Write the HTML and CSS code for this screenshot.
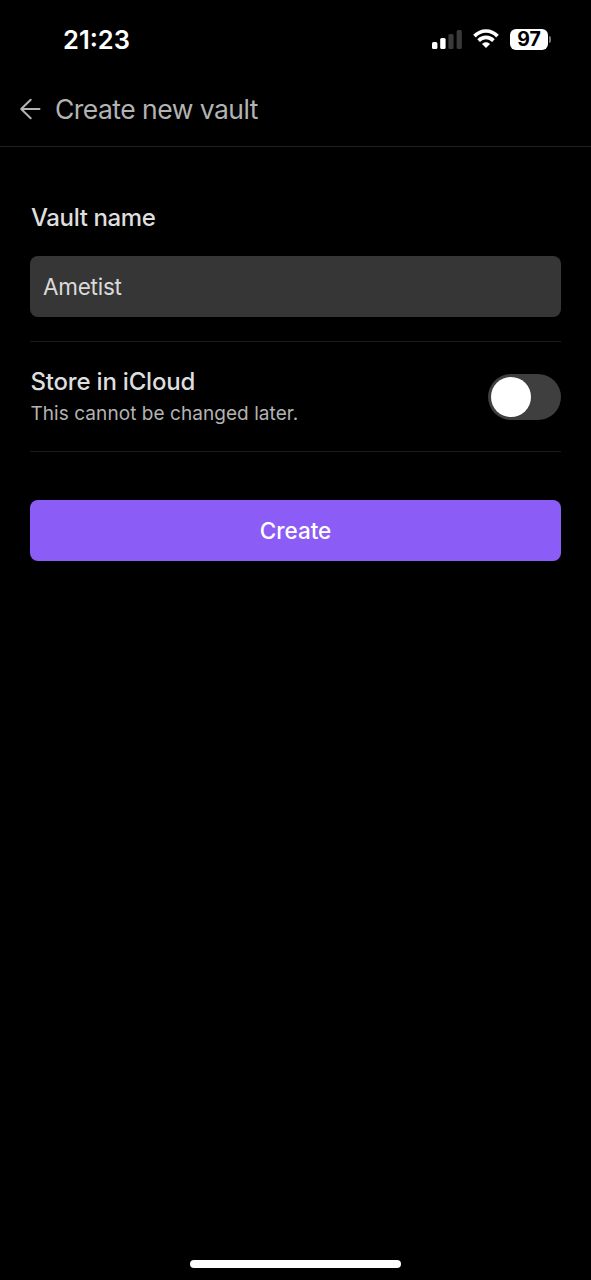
FILE: index.html
```html
<!DOCTYPE html>
<html lang="en">
<head>
<meta charset="utf-8">
<title>Create new vault</title>
<link rel="stylesheet" href="styles.css">
</head>
<body>
<div class="screen">
  <div class="status-bar">
    <span class="clock">21:23</span>
    <div class="indicators">
      <svg class="signal" width="30" height="20" viewBox="0 0 30 20">
        <rect x="0" y="12" width="5.4" height="7" rx="1.5" fill="#fff"/>
        <rect x="8.2" y="8" width="5.4" height="11" rx="1.5" fill="#fff"/>
        <rect x="16.4" y="4" width="5.2" height="15" rx="1.5" fill="#3a3a3a"/>
        <rect x="24.6" y="0" width="5.2" height="19" rx="1.5" fill="#3a3a3a"/>
      </svg>
      <svg class="wifi" width="26" height="20" viewBox="0 0 26 20">
        <g fill="none" stroke="#fff" stroke-width="3.7">
          <path d="M1.5 7.1C8 .3 18 .3 24.5 7.1"/>
          <path d="M5.6 11.6C9.7 7.4 16.3 7.4 20.4 11.6"/>
        </g>
        <path d="M13 19l-4-4.1c2.2-2.2 5.8-2.2 8 0z" fill="#fff"/>
      </svg>
      <div class="battery">
        <span class="battery-level">97</span>
        <span class="battery-tip"></span>
      </div>
    </div>
  </div>
  <header class="header">
    <svg class="back" width="22" height="22" viewBox="0 0 22 22" fill="none" stroke="#b3b3b3" stroke-width="2" stroke-linecap="round" stroke-linejoin="round">
      <path d="M20.5 11H2.2M11.7 1.7L2.2 11L11.7 20.3"/>
    </svg>
    <h1 class="title">Create new vault</h1>
  </header>
  <main class="content">
    <div class="label name-label"><span>Vault name</span></div>
    <div class="input"><span>Ametist</span></div>
    <div class="setting">
      <div class="setting-text">
        <div class="label store-label">Store in iCloud</div>
        <div class="description">This cannot be changed later.</div>
      </div>
      <div class="toggle"><div class="knob"></div></div>
    </div>
    <div class="button"><span>Create</span></div>
  </main>
  <div class="home-indicator"></div>
</div>
</body>
</html>
```
FILE: styles.css
```css
* { box-sizing: border-box; }
body {
  margin: 0;
  background: #000;
  font-family: Inter, "Liberation Sans", sans-serif;
}
.screen {
  display: flex;
  flex-direction: column;
  width: 591px;
  height: 1280px;
  padding-bottom: 12px;
  overflow: hidden;
  white-space: nowrap;
}
.status-bar {
  display: flex;
  justify-content: space-between;
  align-items: center;
  height: 78px;
  padding: 0 40px 0 63px;
}
.clock {
  padding-top: 1px;
  color: #fff;
  font-size: 25.5px;
  font-weight: 600;
}
.indicators { display: flex; align-items: center; }
.signal { margin-top: 1px; }
.wifi { margin: 0 11px 0 11px; }
.battery { display: flex; align-items: center; gap: 1px; }
.battery-level {
  width: 38px;
  height: 21px;
  border-radius: 6px;
  background: #fff;
  color: #000;
  font-size: 19.5px;
  font-weight: 700;
  line-height: 21px;
  text-align: center;
}
.battery-tip {
  width: 2px;
  height: 7px;
  border-radius: 0 2px 2px 0;
  background: #777;
}
.header {
  display: flex;
  align-items: center;
  gap: 14px;
  height: 69px;
  padding: 0 19px 6px;
  border-bottom: 1px solid #202020;
}
.title {
  margin: 0;
  color: #b3b3b3;
  font-size: 26.5px;
  font-weight: 400;
  letter-spacing: -0.53px;
}
.content { flex: 1; padding: 55px 30px 0; }
.label {
  color: #dedede;
  font-size: 24px;
  font-weight: 500;
  line-height: 32px;
}
.name-label { padding-left: 1px; letter-spacing: -0.38px; }
.store-label { letter-spacing: -0.2px; }
.input {
  height: 61px;
  margin-top: 22px;
  padding: 0 13px;
  border-radius: 8px;
  background: #363636;
  color: #dadada;
  font-size: 22.5px;
  letter-spacing: -0.25px;
  line-height: 62px;
}
.setting {
  display: flex;
  justify-content: space-between;
  align-items: center;
  height: 111px;
  margin-top: 24px;
  border: solid #1c1c1c;
  border-width: 1px 0;
}
.description {
  color: #b3b3b3;
  font-size: 19px;
  letter-spacing: 0.06px;
  line-height: 32px;
}
.store-label, .description { padding-left: 0.5px; }
.setting-text { padding-top: 2px; }
.toggle {
  width: 73px;
  height: 46px;
  padding: 3px;
  border-radius: 23px;
  background: #3f3f3f;
}
.knob {
  width: 40px;
  height: 40px;
  border-radius: 50%;
  background: #fff;
}
.button {
  height: 61px;
  margin-top: 48px;
  border-radius: 8px;
  background: #8b5cf6;
  color: #fff;
  font-size: 22.5px;
  font-weight: 500;
  line-height: 61px;
  text-align: center;
}
.home-indicator {
  width: 211px;
  height: 8px;
  margin-left: 190px;
  border-radius: 4px;
  background: #fff;
}
```
